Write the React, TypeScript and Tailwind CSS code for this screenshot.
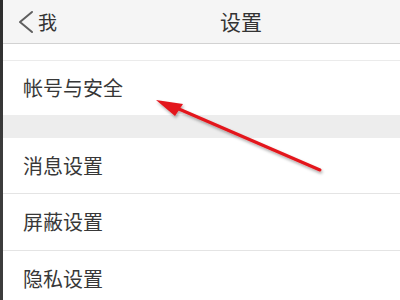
import React from "react";

const font = { fontFamily: '"Noto Sans CJK SC", "Noto Sans", sans-serif' };

const Row: React.FC<{ label: string; h: string; border?: boolean }> = ({ label, h, border }) => (
  <div className={`flex shrink-0 items-center bg-white pl-[20px] ${h} ${border ? "border-b border-[#e4e4e4]" : ""}`}>
    <span className="text-[20px] leading-none text-[#383838]">{label}</span>
  </div>
);

export default function App() {
  return (
    <div className="relative flex w-[400px] h-[300px] overflow-hidden bg-white" style={font}>
      <div className="w-[3px] shrink-0 bg-gradient-to-b from-[#2c2c2c] via-[#3c3c3c] to-[#3c3c3c]" />
      <div className="flex-1 flex flex-col">
        <header className="h-[44px] shrink-0 flex items-center bg-[#f5f5f5] border-b border-[#d2d2d2]">
          <div className="flex items-center pl-[15px] gap-[4px]">
            <svg width="16" height="24" viewBox="0 0 16 24" fill="none">
              <polyline points="14,2 2,12 14,22" stroke="#5f5f5f" strokeWidth="2" strokeLinecap="round" strokeLinejoin="round" />
            </svg>
            <span className="text-[19px] leading-none text-[#333]">我</span>
          </div>
          <span className="ml-[163px] text-[21px] leading-none text-[#333]">设置</span>
        </header>
        <div className="h-[17px] shrink-0 bg-white border-b border-[#ebebeb]" />
        <Row label="帐号与安全" h="h-[54px]" />
        <div className="h-[23px] shrink-0 bg-[#ededed]" />
        <Row label="消息设置" h="h-[56px]" border />
        <Row label="屏蔽设置" h="h-[57px]" border />
        <Row label="隐私设置" h="h-[56px]" />
      </div>
      <svg className="absolute left-0 top-0 pointer-events-none" width="400" height="300" viewBox="0 0 400 300">
        <defs>
          <filter id="sh" x="-20%" y="-20%" width="140%" height="140%">
            <feDropShadow dx="1" dy="2" stdDeviation="1.5" floodColor="#000" floodOpacity="0.35" />
          </filter>
        </defs>
        <g filter="url(#sh)">
          <line x1="320" y1="170" x2="172" y2="106" stroke="#e3151b" strokeWidth="3" strokeLinecap="round" />
          <polygon points="156,100 183,104 175,116" fill="#e3151b" />
        </g>
      </svg>
    </div>
  );
}
